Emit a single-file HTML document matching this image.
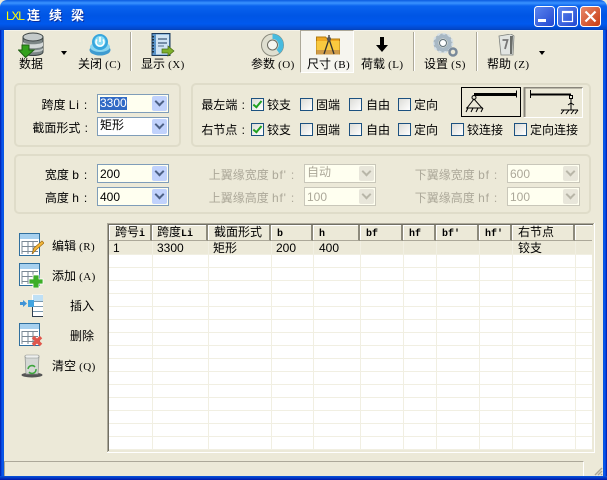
<!DOCTYPE html>
<html><head><meta charset="utf-8">
<style>
html,body{margin:0;padding:0;background:#ece9d8}
#w{position:relative;width:607px;height:480px;overflow:hidden;background:#ece9d8;font:12px "WenQuanYi Zen Hei","Liberation Sans","Noto Sans CJK SC",sans-serif;color:#000}
.a{position:absolute}
.t{position:absolute;white-space:nowrap;line-height:14px;font-size:12px}
.r{text-align:right}
.l{font-family:"Liberation Sans",sans-serif;letter-spacing:.8px}
.p{font:11px "Liberation Serif",serif;letter-spacing:.4px}
.g{position:absolute;border:2px solid #dfdcc9;border-radius:5px;box-sizing:border-box}
.sep{position:absolute;width:2px;background:linear-gradient(90deg,#aca899 50%,#fff 50%);top:32px;height:39px}
.c{position:absolute;width:72px;height:19px;box-sizing:border-box;border:1px solid #7f9db9;background:#fffff0;font:12px "Liberation Sans","WenQuanYi Zen Hei",sans-serif}
.c i{position:absolute;right:1px;top:1px;width:15px;height:15px;background:#c1d2fc;border-radius:2px;font-style:normal}
.c i:after{content:"";position:absolute;left:4px;top:2px;width:5px;height:5px;border:solid #4d6185;border-width:0 2px 2px 0;transform:rotate(45deg)}
.c span{position:absolute;left:2px;top:2px;line-height:14px}
.c span.z{font-family:"WenQuanYi Zen Hei",sans-serif;top:0}
.c.d{border-color:#c9c7ba;color:#aca899}
.c.d i{background:#e8e6da}
.c.d i:after{border-color:#b8b6a8}
.c.w{background:#fff}
.k{position:absolute;width:13px;height:13px;box-sizing:border-box;border:1px solid #1c5180;background:linear-gradient(135deg,#dcdcd7,#fff)}
.k.on:after{content:"";position:absolute;left:3px;top:0px;width:3px;height:7px;border:solid #21a121;border-width:0 2px 2px 0;transform:rotate(40deg)}
.dim{color:#aca899}
.hd{position:absolute;top:225px;height:16px;box-sizing:border-box;background:#ece9d8;border-right:2px solid #8d8a7c;border-bottom:1px solid #aca899;box-shadow:inset 1px 1px 0 #fff;font:12px "WenQuanYi Zen Hei",monospace;line-height:15px;padding-left:6px;white-space:nowrap;overflow:hidden}
.hd b{font:bold 10px "Liberation Mono",monospace;line-height:15px}
.hl{position:absolute;left:109px;width:483px;height:1px;background:#f1efe2}
.vl{position:absolute;top:241px;height:209px;width:1px;background:#f1efe2}
.cell{position:absolute;top:241px;line-height:14px;font:12px "Liberation Sans",sans-serif;white-space:nowrap}
.cz{position:absolute;top:239px;line-height:14px;font:12px "WenQuanYi Zen Hei",sans-serif;white-space:nowrap}
</style></head><body><div id="w">

<!-- title bar -->
<div class="a" style="left:0;top:0;width:607px;height:30px;background:linear-gradient(180deg,#0a5be0 0,#3a93ff 3px,#0a63ee 6px,#0055e5 16px,#0059ee 24px,#0347c9 29px,#0240b8 30px);border-radius:7px 7px 0 0"></div>
<div class="a" style="left:0;top:30px;width:4px;height:450px;background:linear-gradient(90deg,#0018a8,#0856ee 50%,#0855dd)"></div>
<div class="a" style="left:603px;top:30px;width:4px;height:450px;background:linear-gradient(90deg,#0855dd,#0856ee 50%,#0018a8)"></div>
<div class="a" style="left:0;top:476px;width:607px;height:4px;background:linear-gradient(180deg,#0855dd,#0018a8)"></div>
<div class="t" style="left:6px;top:9px;color:#ff0;font:12px 'Liberation Sans',sans-serif;letter-spacing:-1.2px;line-height:15px">LXL</div>
<div class="t" style="left:27px;top:8px;color:#fff;font-weight:bold;font-size:13px;line-height:16px;letter-spacing:9px;text-shadow:1px 1px 0 #0a2f9e">连续梁</div>
<svg class="a" style="left:533px;top:5px" width="70" height="23" viewBox="0 0 70 23">
<defs><linearGradient id="b" x1="0" y1="0" x2="1" y2="1"><stop offset="0" stop-color="#5c86ef"/><stop offset="1" stop-color="#2146d0"/></linearGradient>
<linearGradient id="x" x1="0" y1="0" x2="1" y2="1"><stop offset="0" stop-color="#e98a6c"/><stop offset="1" stop-color="#c63a10"/></linearGradient></defs>
<rect x="1.500" y="1.500" width="20" height="20" rx="3" fill="url(#b)" stroke="#fff"/>
<rect x="5" y="14" width="8" height="3" fill="#fff"/>
<rect x="24.500" y="1.500" width="20" height="20" rx="3" fill="url(#b)" stroke="#fff"/>
<path d="M29.500 6.500h10v10h-10zM29.500 7.500h10" fill="none" stroke="#fff" stroke-width="1.200"/>
<rect x="47.500" y="1.500" width="20" height="20" rx="3" fill="url(#x)" stroke="#fff"/>
<path d="M52.500 6.500l10 10M62.500 6.500l-10 10" stroke="#fff" stroke-width="2.200"/>
</svg>

<!-- toolbar -->
<div class="a" style="left:4px;top:30px;width:599px;height:1px;background:#f4f2e8"></div>
<svg class="a" style="left:18px;top:32px" width="27" height="26" viewBox="0 0 27 26">
<path d="M5 5v15c0 2 4 3.500 10 3.500s10-1.500 10-3.500V5z" fill="#7c8686" stroke="#3c4444"/>
<ellipse cx="15" cy="5" rx="10" ry="4" fill="#c4caca" stroke="#3c4444"/>
<path d="M5 10c2 3 18 3 20 0v4c-2 3-18 3-20 0z" fill="#d3d8d8"/><path d="M5 16c2 3 18 3 20 0v2c-2 3-18 3-20 0z" fill="#bfc6c6"/>
<path d="M4 13h7v5h5l-8.500 7.500L0.500 18h3.500z" fill="#33a11c" stroke="#1f5f13"/>
</svg>
<div class="a" style="left:61px;top:51px;width:0;height:0;border:3.500px solid transparent;border-top:4px solid #000"></div>
<div class="t" style="left:19px;top:57px">数据</div>
<svg class="a" style="left:88px;top:33px" width="24" height="24" viewBox="0 0 24 24">
<ellipse cx="12" cy="17" rx="10.500" ry="5.500" fill="#3f9bd0"/>
<ellipse cx="12" cy="14" rx="10" ry="5" fill="#8cd5ef"/>
<circle cx="12" cy="9" r="8" fill="#37a6dd"/><circle cx="12" cy="8.500" r="5.500" fill="#8adcf5"/>
<path d="M9 6.500a4 4 0 1 0 6 0M12 4v5" fill="none" stroke="#fff" stroke-width="1.500"/>
</svg>
<div class="t" style="left:78px;top:57px">关闭<span class="p"> (C)</span></div>
<div class="sep" style="left:130px"></div>
<svg class="a" style="left:150px;top:33px" width="26" height="26" viewBox="0 0 26 26">
<rect x="2" y="0.500" width="18" height="22" fill="#5a94c9" stroke="#1d3a5c"/><rect x="6" y="1.500" width="13" height="20" fill="#cfe3f3"/>
<path d="M3 3v18" stroke="#1d2f40" stroke-width="2" stroke-dasharray="1.500 1.500"/>
<path d="M8 6h9M8 10h9" stroke="#55708c" stroke-width="1.500"/><path d="M8 13h6" stroke="#55708c"/>
<path d="M12 16h6v-3l6 5-6 5v-3h-6z" fill="#7eb02c" stroke="#456a12" stroke-width=".7"/>
</svg>
<div class="t" style="left:141px;top:57px">显示<span class="p"> (X)</span></div>
<svg class="a" style="left:260px;top:33px" width="25" height="24" viewBox="0 0 25 24">
<circle cx="12.500" cy="12" r="11" fill="#dfdfd0" stroke="#8b8b7e"/>
<path d="M12.500 1a11 11 0 0 1 7 19.500l-3-4a6 6 0 0 0-4-10.500z" fill="#47bbdf"/>
<circle cx="12.500" cy="12" r="5" fill="#f6f6f0" stroke="#6b6b60"/>
</svg>
<div class="t" style="left:251px;top:57px">参数<span class="p"> (O)</span></div>

<div class="a" style="left:300px;top:30px;width:54px;height:43px;box-sizing:border-box;border:1px solid #fff;border-top-color:#aca899;border-left-color:#aca899;background:#f6f5ef"></div>
<svg class="a" style="left:316px;top:34px" width="25" height="21" viewBox="0 0 25 21">
<path d="M0.500 3h9l2 2h12v15h-23z" fill="#f0a820" stroke="#b07a10"/>
<path d="M0.500 7h23v10h-23z" fill="#f9c93f"/><rect x="0.500" y="16" width="23" height="4.500" fill="#cf9b4a"/>
<path d="M13 1v4M13 5l-5 15M13 5l5 15" stroke="#333" stroke-width="1.300" fill="none"/><circle cx="13" cy="5" r="2" fill="#555"/>
</svg>
<div class="t" style="left:307px;top:57px">尺寸<span class="p"> (B)</span></div>
<svg class="a" style="left:375px;top:37px" width="14" height="16" viewBox="0 0 14 16"><path d="M5 0h4v8h4l-6 7-6-7h4z" fill="#000"/></svg>
<div class="t" style="left:361px;top:57px">荷载<span class="p"> (L)</span></div>
<div class="sep" style="left:413px"></div>
<svg class="a" style="left:433px;top:33px" width="25" height="25" viewBox="0 0 25 25">
<circle cx="10" cy="10" r="7" fill="none" stroke="#a8b8c4" stroke-width="5"/>
<circle cx="10" cy="10" r="9.500" fill="none" stroke="#d7e1e7" stroke-width="2" stroke-dasharray="3 2.500"/>
<circle cx="10" cy="10" r="3.500" fill="#fff" stroke="#5c6d78"/>
<circle cx="20" cy="19" r="3.500" fill="none" stroke="#79899a" stroke-width="2.500"/>
</svg>
<div class="t" style="left:424px;top:57px">设置<span class="p"> (S)</span></div>
<div class="sep" style="left:476px"></div>
<svg class="a" style="left:498px;top:34px" width="18" height="22" viewBox="0 0 18 22">
<path d="M1 2l12-2 3 2-1 19H3z" fill="#e2e5e2" stroke="#7f837f" stroke-width=".8"/>
<path d="M12 2h3l-1 18h-2z" fill="#6a6d6a"/>
<path d="M4.500 6h5l-2.500 9" fill="none" stroke="#777" stroke-width="1.800"/>
</svg>
<div class="a" style="left:539px;top:51px;width:0;height:0;border:3.500px solid transparent;border-top:4px solid #000"></div>
<div class="t" style="left:487px;top:57px">帮助<span class="p"> (Z)</span></div>

<!-- groups -->
<div class="g" style="left:14px;top:83px;width:167px;height:64px"></div>
<div class="g" style="left:191px;top:83px;width:400px;height:64px"></div>
<div class="g" style="left:14px;top:154px;width:577px;height:60px"></div>

<div class="t r" style="left:18px;top:98px;width:70px">跨度 <span class="l">Li :</span></div>
<div class="t r" style="left:18px;top:121px;width:70px;word-spacing:1px">截面形式 :</div>
<div class="c" style="left:97px;top:94px"><span style="background:#316ac5;color:#fff;left:2px;line-height:13px">3300</span><i></i></div>
<div class="c w" style="left:97px;top:117px"><span class="z">矩形</span><i></i></div>

<div class="t r" style="left:193px;top:98px;width:52px;word-spacing:1px">最左端 :</div>
<div class="t r" style="left:193px;top:123px;width:52px;word-spacing:1px">右节点 :</div>

<div class="k on" style="left:251px;top:98px"></div><div class="t" style="left:267px;top:98px">铰支</div>
<div class="k" style="left:300px;top:98px"></div><div class="t" style="left:316px;top:98px">固端</div>
<div class="k" style="left:349px;top:98px"></div><div class="t" style="left:366px;top:98px">自由</div>
<div class="k" style="left:398px;top:98px"></div><div class="t" style="left:414px;top:98px">定向</div>

<div class="k on" style="left:251px;top:123px"></div><div class="t" style="left:267px;top:123px">铰支</div>
<div class="k" style="left:300px;top:123px"></div><div class="t" style="left:316px;top:123px">固端</div>
<div class="k" style="left:349px;top:123px"></div><div class="t" style="left:366px;top:123px">自由</div>
<div class="k" style="left:398px;top:123px"></div><div class="t" style="left:414px;top:123px">定向</div>
<div class="k" style="left:451px;top:123px"></div><div class="t" style="left:467px;top:123px">铰连接</div>
<div class="k" style="left:514px;top:123px"></div><div class="t" style="left:530px;top:123px">定向连接</div>

<!-- diagrams -->
<svg class="a" style="left:461px;top:87px" width="131" height="32" viewBox="0 0 131 32">
<rect x="0.500" y="0.500" width="59" height="29" fill="#ece9d8" stroke="#000"/>
<path d="M13 7.500h42" stroke="#000" stroke-width="3"/><path d="M55.500 3.500v7" stroke="#000"/>
<circle cx="13" cy="10.500" r="2" fill="none" stroke="#000"/>
<path d="M13 12L6 21h15zM5 21h17M7 21l-2 4M12 21l-2 4M17 21l-2 4M22 21l-2 4" fill="none" stroke="#000"/>
<rect x="63" y="0" width="59" height="31" fill="#ece9d8"/>
<path d="M63.500 30V0.500H121.500" fill="none" stroke="#88857a" stroke-width="2"/>
<path d="M63 30.500h59M121.500 1v30" stroke="#fff"/>
<path d="M69 7.500h41" stroke="#000" stroke-width="2"/><path d="M69.500 3v8" stroke="#000"/>
<rect x="108.500" y="8.500" width="3" height="3" fill="none" stroke="#000"/>
<path d="M110 11v12M107 18l3-2 3 2M100 23h17M103 23l-3 4M108 23l-3 4M113 23l-3 4M117 23l-3 4" fill="none" stroke="#000"/>
</svg>

<!-- section -->
<div class="t r" style="left:18px;top:168px;width:70px">宽度 <span class="l">b :</span></div>
<div class="t r" style="left:18px;top:191px;width:70px">高度 <span class="l">h :</span></div>
<div class="c" style="left:97px;top:164px"><span>200</span><i></i></div>
<div class="c" style="left:97px;top:187px"><span>400</span><i></i></div>

<div class="t r dim" style="left:193px;top:168px;width:102px">上翼缘宽度 <span class="l">bf' :</span></div>
<div class="t r dim" style="left:193px;top:191px;width:102px">上翼缘高度 <span class="l">hf' :</span></div>
<div class="c d" style="left:304px;top:164px"><span class="z">自动</span><i></i></div>
<div class="c d" style="left:304px;top:187px"><span>100</span><i></i></div>
<div class="t r dim" style="left:398px;top:168px;width:100px">下翼缘宽度 <span class="l">bf :</span></div>
<div class="t r dim" style="left:398px;top:191px;width:100px">下翼缘高度 <span class="l">hf :</span></div>
<div class="c d" style="left:507px;top:164px;width:73px"><span>600</span><i></i></div>
<div class="c d" style="left:507px;top:187px;width:73px"><span>100</span><i></i></div>

<!-- side buttons -->
<svg class="a" style="left:19px;top:233px" width="25" height="24" viewBox="0 0 25 24">
<rect x="0.500" y="0.500" width="20" height="22" fill="#fff" stroke="#2f6f9e"/><rect x="1" y="1" width="19" height="5" fill="#a6d0ef"/>
<path d="M3 8.500h16M3 13.500h16M3 18.500h16M3 8v13M9 8v13M14 8v13" stroke="#7a8894" fill="none"/>
<path d="M13 21l2-6 8-7 2 2-8 7z" fill="#f3b73a" stroke="#a06b12" stroke-width=".7"/>
</svg>
<div class="t" style="left:52px;top:239px">编辑<span class="p"> (R)</span></div>
<svg class="a" style="left:19px;top:263px" width="25" height="25" viewBox="0 0 25 25">
<rect x="0.500" y="0.500" width="20" height="22" fill="#fff" stroke="#2f6f9e"/><rect x="1" y="1" width="19" height="5" fill="#a6d0ef"/>
<path d="M3 8.500h16M3 13.500h16M3 18.500h16M3 8v13M9 8v13M14 8v13" stroke="#7a8894" fill="none"/>
<path d="M14 12h6v4h4v5h-4v4h-6v-4h-4v-5h4z" fill="#3cae28" stroke="#fff" stroke-width=".8"/>
</svg>
<div class="t" style="left:52px;top:269px">添加<span class="p"> (A)</span></div>
<svg class="a" style="left:19px;top:294px" width="25" height="24" viewBox="0 0 25 24">
<rect x="13" y="0.500" width="11" height="22" fill="#fff"/><path d="M13 22.500h11M13.500 7v16" stroke="#2f3f50" fill="none"/>
<path d="M14 1h10v6H14z" fill="#bfe0f5"/><path d="M14 7.500h10M14 12.500h10M14 17.500h10" stroke="#7a98ae"/>
<rect x="9" y="6" width="6" height="7" fill="#42a4e0"/>
<path d="M1 8h3V6l4 3.500L4 13v-2H1z" fill="#3f93d6"/>
</svg>
<div class="t" style="left:70px;top:299px">插入</div>
<svg class="a" style="left:19px;top:323px" width="25" height="25" viewBox="0 0 25 25">
<rect x="0.500" y="0.500" width="20" height="22" fill="#fff" stroke="#2f6f9e"/><rect x="1" y="1" width="19" height="5" fill="#a6d0ef"/>
<path d="M3 8.500h16M3 13.500h16M3 18.500h16M3 8v13M9 8v13M14 8v13" stroke="#7a8894" fill="none"/>
<path d="M14 14l8 8M22 14l-8 8" stroke="#e0574c" stroke-width="3.500"/>
</svg>
<div class="t" style="left:70px;top:329px">删除</div>
<svg class="a" style="left:21px;top:354px" width="23" height="24" viewBox="0 0 23 24">
<ellipse cx="11" cy="21" rx="10.500" ry="2.500" fill="#555"/>
<path d="M4 2h14l-1 18H5z" fill="#d5d8d5" stroke="#8c908c" stroke-width=".7"/>
<rect x="4" y="1" width="14" height="3" rx="1.500" fill="#eef0ee" stroke="#8c908c" stroke-width=".6"/>
<path d="M7 15a4 4 0 0 1 7-2M15 15a4 4 0 0 1-7 3" fill="none" stroke="#3ca53c" stroke-width="1.500"/>
</svg>
<div class="t" style="left:52px;top:359px">清空<span class="p"> (Q)</span></div>

<!-- grid -->
<div class="a" style="left:109px;top:225px;width:483px;height:225px;background:#fff"></div>
<div class="a" style="left:107px;top:223px;width:487px;height:1px;background:#aca899"></div>
<div class="a" style="left:108px;top:224px;width:485px;height:1px;background:#716f64"></div>
<div class="a" style="left:107px;top:223px;width:1px;height:229px;background:#aca899"></div>
<div class="a" style="left:108px;top:224px;width:1px;height:227px;background:#716f64"></div>
<div class="a" style="left:594px;top:223px;width:1px;height:230px;background:#fff"></div>
<div class="a" style="left:107px;top:452px;width:488px;height:1px;background:#fff"></div>
<div class="a" style="left:109px;top:241px;width:483px;height:13px;background:#ece9d8"></div>
<div class="hl" style="top:254px"></div><div class="hl" style="top:267px"></div><div class="hl" style="top:280px"></div><div class="hl" style="top:293px"></div><div class="hl" style="top:306px"></div><div class="hl" style="top:319px"></div><div class="hl" style="top:332px"></div><div class="hl" style="top:345px"></div><div class="hl" style="top:358px"></div><div class="hl" style="top:371px"></div><div class="hl" style="top:384px"></div><div class="hl" style="top:397px"></div><div class="hl" style="top:410px"></div><div class="hl" style="top:423px"></div><div class="hl" style="top:436px"></div><div class="hl" style="top:449px"></div>
<div class="vl" style="left:152px"></div><div class="vl" style="left:208px"></div><div class="vl" style="left:271px"></div><div class="vl" style="left:313px"></div><div class="vl" style="left:360px"></div><div class="vl" style="left:403px"></div><div class="vl" style="left:436px"></div><div class="vl" style="left:479px"></div><div class="vl" style="left:512px"></div><div class="vl" style="left:575px"></div>
<div class="hd" style="left:109px;width:43px">跨号<b>i</b></div>
<div class="hd" style="left:152px;width:56px;padding-left:5px">跨度<b>Li</b></div>
<div class="hd" style="left:208px;width:63px">截面形式</div>
<div class="hd" style="left:271px;width:42px"><b>b</b></div>
<div class="hd" style="left:313px;width:47px"><b>h</b></div>
<div class="hd" style="left:360px;width:43px"><b>bf</b></div>
<div class="hd" style="left:403px;width:33px"><b>hf</b></div>
<div class="hd" style="left:436px;width:43px"><b>bf'</b></div>
<div class="hd" style="left:479px;width:33px"><b>hf'</b></div>
<div class="hd" style="left:512px;width:63px">右节点</div>
<div class="hd" style="left:575px;width:17px;border-right:0"></div>
<div class="cell" style="left:113px">1</div>
<div class="cell" style="left:157px">3300</div>
<div class="cz" style="left:213px">矩形</div>
<div class="cell" style="left:276px">200</div>
<div class="cell" style="left:319px">400</div>
<div class="cz" style="left:518px">铰支</div>

<!-- status bar -->
<div class="a" style="left:4px;top:461px;width:580px;height:15px;box-sizing:border-box;border-top:1px solid #aca899;border-left:1px solid #aca899;border-right:1px solid #fff"></div>
<svg class="a" style="left:594px;top:467px" width="9" height="9" viewBox="0 0 9 9"><path d="M8 1L1 8M8 4L4 8M8 7L7 8" stroke="#aca899" stroke-width="1.500"/></svg>
</div></body></html>
